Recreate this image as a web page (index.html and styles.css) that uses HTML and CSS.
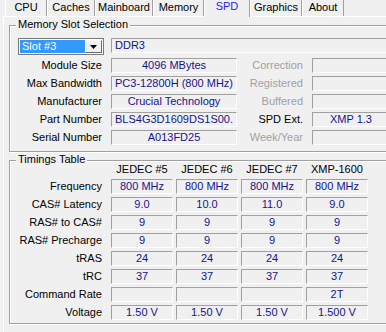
FILE: index.html
```html
<!DOCTYPE html>
<html lang="en">
<head>
    <meta charset="UTF-8">
    <meta name="viewport" content="width=device-width, initial-scale=1.0">
    <title>CPU-Z SPD</title>
    <link rel="stylesheet" href="styles.css">
</head>
<body>
    <div class="window">
        <div class="tabs">
            <div class="tab tab-cpu">CPU</div>
            <div class="tab tab-caches">Caches</div>
            <div class="tab tab-mainboard">Mainboard</div>
            <div class="tab tab-memory">Memory</div>
            <div class="tab tab-spd active">SPD</div>
            <div class="tab tab-graphics">Graphics</div>
            <div class="tab tab-about">About</div>
        </div>

        <div class="panel">
            <div class="group group-slot">
                <div class="group-title">Memory Slot Selection</div>
                <div class="slot-grid">
                    <div class="select">
                        <div class="select-value">Slot #3</div>
                        <div class="select-btn">
                            <svg width="7" height="4" viewBox="0 0 7 4"><path d="M0 0h7L3.5 4z" fill="#000"/></svg>
                        </div>
                    </div>
                    <div class="field field-type">DDR3</div>

                    <div class="label">Module Size</div>
                    <div class="field">4096 MBytes</div>
                    <div class="label dim">Correction</div>
                    <div class="field"></div>

                    <div class="label">Max Bandwidth</div>
                    <div class="field">PC3-12800H (800 MHz)</div>
                    <div class="label dim">Registered</div>
                    <div class="field"></div>

                    <div class="label">Manufacturer</div>
                    <div class="field">Crucial Technology</div>
                    <div class="label dim">Buffered</div>
                    <div class="field"></div>

                    <div class="label">Part Number</div>
                    <div class="field">BLS4G3D1609DS1S00.</div>
                    <div class="label">SPD Ext.</div>
                    <div class="field">XMP 1.3</div>

                    <div class="label">Serial Number</div>
                    <div class="field">A013FD25</div>
                    <div class="label dim">Week/Year</div>
                    <div class="field"></div>
                </div>
            </div>

            <div class="group group-timings">
                <div class="group-title">Timings Table</div>
                <div class="timings-grid">
                    <div></div>
                    <div class="col-head">JEDEC #5</div>
                    <div class="col-head">JEDEC #6</div>
                    <div class="col-head">JEDEC #7</div>
                    <div class="col-head">XMP-1600</div>

                    <div class="label">Frequency</div>
                    <div class="field">800 MHz</div>
                    <div class="field">800 MHz</div>
                    <div class="field">800 MHz</div>
                    <div class="field">800 MHz</div>

                    <div class="label">CAS# Latency</div>
                    <div class="field">9.0</div>
                    <div class="field">10.0</div>
                    <div class="field">11.0</div>
                    <div class="field">9.0</div>

                    <div class="label">RAS# to CAS#</div>
                    <div class="field">9</div>
                    <div class="field">9</div>
                    <div class="field">9</div>
                    <div class="field">9</div>

                    <div class="label">RAS# Precharge</div>
                    <div class="field">9</div>
                    <div class="field">9</div>
                    <div class="field">9</div>
                    <div class="field">9</div>

                    <div class="label">tRAS</div>
                    <div class="field">24</div>
                    <div class="field">24</div>
                    <div class="field">24</div>
                    <div class="field">24</div>

                    <div class="label">tRC</div>
                    <div class="field">37</div>
                    <div class="field">37</div>
                    <div class="field">37</div>
                    <div class="field">37</div>

                    <div class="label">Command Rate</div>
                    <div class="field"></div>
                    <div class="field"></div>
                    <div class="field"></div>
                    <div class="field">2T</div>

                    <div class="label">Voltage</div>
                    <div class="field">1.50 V</div>
                    <div class="field">1.50 V</div>
                    <div class="field">1.50 V</div>
                    <div class="field">1.500 V</div>
                </div>
            </div>
        </div>
    </div>
</body>
</html>
```

FILE: styles.css
```css
* {
    margin: 0;
    padding: 0;
    box-sizing: border-box;
}

body {
    background: #f0f0f0;
    font-family: "Liberation Sans", Arial, sans-serif;
    font-size: 11px;
    color: #000;
    overflow: hidden;
}

.window {
    width: 404px;
    padding-left: 3px;
}

/* tab strip */
.tabs {
    display: flex;
    height: 16px;
    padding-left: 2px;
}

.tab {
    position: relative;
    height: 16px;
    line-height: 14px;
    text-align: center;
    white-space: nowrap;
    border-left: 1px solid #fff;
    border-right: 1px solid #a0a0a0;
}

.tab.active {
    height: 17px;
    line-height: 12px;
    color: #1f1ff5;
    background: #f0f0f0;
    z-index: 1;
}

.tab-cpu { width: 42px; }
.tab-caches { width: 48px; }
.tab-mainboard { width: 58px; }
.tab-memory { width: 51px; }
.tab-spd { width: 46px; }
.tab-graphics { width: 52px; }
.tab-about { width: 42px; }

.panel {
    border-top: 1px solid #fff;
    border-left: 1px solid #fff;
    padding: 8px 5px 9px 5px;
}

/* group boxes */
.group {
    position: relative;
    border: 1px solid #a0a0a0;
    box-shadow: inset 1px 1px 0 #fff, 1px 1px 0 #fff;
}

.group-title {
    position: absolute;
    top: -8px;
    left: 6px;
    padding: 0 2px;
    line-height: 13px;
    background: #f0f0f0;
}

.group-slot {
    padding: 12px 8px 6px 8px;
}

.group-timings {
    margin-top: 8px;
    padding: 1px 8px 3px 8px;
}

.slot-grid {
    display: grid;
    grid-template-columns: 86px 126px 61px 78px;
    grid-template-rows: 17px;
    grid-auto-rows: 15px;
    column-gap: 7px;
    row-gap: 3px;
}

.timings-grid {
    display: grid;
    grid-template-columns: 90px repeat(4, 62px);
    grid-template-rows: 14px;
    grid-auto-rows: 15px;
    column-gap: 3px;
    row-gap: 3px;
}

.label {
    text-align: right;
    padding-right: 2px;
    line-height: 15px;
    white-space: nowrap;
}

.timings-grid .label {
    padding-right: 6px;
}

.label.dim {
    color: #a0a0a0;
}

.col-head {
    text-align: center;
    line-height: 14px;
    white-space: nowrap;
}

.field {
    height: 15px;
    line-height: 13px;
    text-align: center;
    white-space: nowrap;
    overflow: hidden;
    color: #14148c;
    border: 1px solid;
    border-color: #a0a0a0 #fff #fff #a0a0a0;
}

.field-type {
    grid-column: 2 / 5;
    text-align: left;
    padding-left: 3px;
}

/* slot combo box */
.select {
    display: flex;
    height: 17px;
    padding: 1px;
    background: #fff;
    border: 1px solid #7a7a7a;
}

.select-value {
    flex: 1;
    background: #3399ff;
    color: #fff;
    line-height: 13px;
    padding-left: 2px;
}

.select-btn {
    width: 17px;
    display: flex;
    align-items: center;
    justify-content: center;
    background: #f0f0f0;
    border: 1px solid;
    border-color: #fff #696969 #696969 #fff;
}
```
